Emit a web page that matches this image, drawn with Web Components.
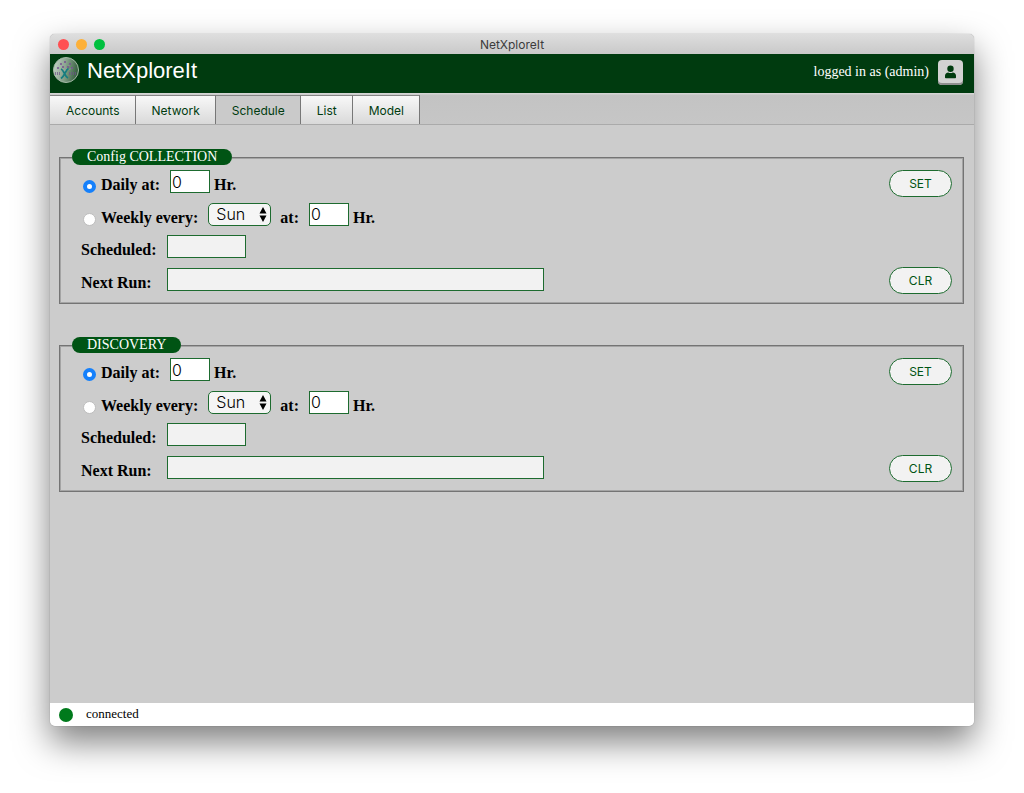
<!DOCTYPE html>
<html lang="en">
<head>
<meta charset="utf-8">
<meta name="viewport" content="width=device-width, initial-scale=1">
<title>NetXploreIt</title>
<style>
html { background: #fff; }
body {
  margin: 0; box-sizing: border-box; min-height: 100vh; padding: 34px 50px 67px;
  display: flex; flex-direction: column;
  font-family: "Liberation Serif", "Times New Roman", serif; color: #000;
}
</style>
</head>
<body>
<app-window caption="NetXploreIt">
  <app-header user="admin">NetXploreIt</app-header>
  <tab-bar>
    <tab-item>Accounts</tab-item>
    <tab-item>Network</tab-item>
    <tab-item selected>Schedule</tab-item>
    <tab-item>List</tab-item>
    <tab-item>Model</tab-item>
  </tab-bar>
  <schedule-view>
    <schedule-panel>Config COLLECTION</schedule-panel>
    <schedule-panel>DISCOVERY</schedule-panel>
  </schedule-view>
  <status-bar>connected</status-bar>
</app-window>

<script>
const define = (name, markup, setup) => {
  const template = document.createElement('template');
  template.innerHTML = markup;
  customElements.define(name, class extends HTMLElement {
    constructor() {
      super();
      this.attachShadow({ mode: 'open' }).append(template.content.cloneNode(true));
    }
    connectedCallback() { if (setup) setup(this, this.shadowRoot); }
  });
};

define('app-window', `
<style>
:host {
  flex: 1; display: flex; flex-direction: column; border-radius: 5px; overflow: hidden;
  background: #ccc; box-shadow: 0 0 1px rgba(0,0,0,.45), 0 16px 34px rgba(0,0,0,.5);
}
.title {
  display: grid; grid-template-columns: 1fr auto 1fr; align-items: center; height: 20px;
  background: linear-gradient(#dedede, #c9c9c9); color: #3c3c3c;
  font: 12px/20px Inter, "Liberation Sans", sans-serif;
}
.caption { padding-top: 1px; }
.lights { display: flex; gap: 7px; padding-left: 8px; }
.lights i { width: 11px; height: 11px; border-radius: 50%; }
.close { background: #ff5052; } .min { background: #fdb038; } .max { background: #00c03f; }
</style>
<div class="title">
  <div class="lights"><i class="close"></i><i class="min"></i><i class="max"></i></div>
  <span class="caption"></span>
</div>
<slot></slot>`, (el, root) => {
  root.querySelector('.caption').textContent = el.getAttribute('caption');
});

define('app-header', `
<style>
:host { display: flex; align-items: center; height: 39px; padding: 0 11px 0 3px; box-sizing: border-box; background: #003b0f; color: #fff; }
.logo { width: 26px; height: 26px; margin: 0 8px 8px 0; }
h1 { flex: 1; margin: 0; padding-bottom: 6px; font: 22px/28px "Liberation Sans", Arial, sans-serif; }
.who { font-size: 14px; line-height: 20px; padding-bottom: 4px; }
button { width: 25px; height: 25px; margin-left: 9px; margin-bottom: 3px; padding: 0; border: 0; border-radius: 4px; background: #d2d2d2; box-shadow: inset 0 -2px #8f8f8f; }
button svg { display: block; width: 25px; height: 25px; }
</style>
<svg class="logo" viewBox="0 0 26 26" aria-hidden="true">
  <defs><linearGradient id="g" x1="0" x2="1" y1="0.4" y2="0.6"><stop offset="0" stop-color="#c3d0c4"/><stop offset=".5" stop-color="#7f9c84"/><stop offset="1" stop-color="#2f5a39"/></linearGradient></defs>
  <circle cx="13" cy="13" r="12.5" fill="url(#g)" stroke="#a5b9a7"/>
  <g stroke="#9caaa5" stroke-width=".5"><path d="M12 14 6 11M12 14 8 7M12 14 12 5M12 14 17 7M12 14 20 11"/></g>
  <g fill="#775091"><circle cx="5" cy="11" r="1"/><circle cx="8" cy="7" r="1"/><circle cx="12" cy="5" r="1"/><circle cx="17" cy="7" r="1"/><circle cx="19" cy="11" r="1"/><circle cx="10" cy="10" r="1"/><circle cx="15" cy="10" r="1"/></g>
  <path d="M2 16.500h5M16 16.500h8" stroke="#70538b" stroke-width="3" stroke-dasharray="1 1" opacity=".7"/>
  <path d="M8 12c3 1 3.500 7.500 7 9M15.500 11.500c-3 1.500-3.500 7-7.500 10" fill="none" stroke="#167d80" stroke-width="1.800"/>
</svg>
<h1><slot></slot></h1>
<span class="who"></span>
<button type="button" aria-label="Account"><svg viewBox="0 0 25 25" aria-hidden="true"><g fill="#003b0f"><circle cx="12.500" cy="8.700" r="3.200"/><path d="M7 17.500v-1.800c0-2 1.500-3.300 3.200-3.300 1.600.9 3.100.9 4.600 0 1.800 0 3.200 1.400 3.200 3.300v1.800q0 .8-.8.800H7.800q-.8 0-.8-.8z"/></g></svg></button>`,
(el, root) => { root.querySelector('.who').textContent = `logged in as (${el.getAttribute('user')})`; });

define('tab-bar', `
<style>
:host { display: block; }
nav { display: flex; height: 32px; padding-top: 2px; box-sizing: border-box; background: linear-gradient(#d4d4d4 1px, #c3c3c3 2px, #c6c6c6); border-bottom: 1px solid #aaa; }
</style>
<nav><slot></slot></nav>`);

define('tab-item', `
<style>
:host { display: flex; }
button { padding: 2px 15px 0 16px; border: 0; border-top: 1px solid #858585; border-right: 1px solid #777; background: linear-gradient(#f8f8f8, #d9d9d9); color: #003b0f; font: 12px/26px Inter, "Liberation Sans", sans-serif; }
:host([selected]) button { background: #cacaca; }
</style>
<button type="button"><slot></slot></button>`);

define('schedule-view', `
<style>
:host { flex: 1; display: flex; flex-direction: column; gap: 33px; padding: 24px 10px 24px 9px; }
</style>
<slot></slot>`);

define('schedule-panel', `
<style>
:host { display: block; }
fieldset { margin: 0; padding: 5px 11px 9px 21px; border: 1px solid #747474; box-shadow: inset 0 0 0 1px #a4a4a4; min-width: 0; }
legend { margin-left: -9px; padding: 0 15px; border-radius: 8px; background: #005414; color: #fff; font-size: 14px; line-height: 16px; }
.body { display: flex; justify-content: space-between; gap: 20px; }
.rows { display: flex; flex-direction: column; justify-content: space-between; padding-bottom: 3px; }
.row { display: flex; align-items: center; height: 23px; font-size: 16px; line-height: 18px; font-weight: bold; }
label, .unit { padding-top: 7px; }
.field { min-width: 76px; }
.unit { margin-left: 4px; }
input, select { box-sizing: border-box; height: 23px; margin: 0 0 0 10px; border: 1px solid #1d6b2f; background: #fff; color: #000; font: 300 16px/21px Inter, "Liberation Sans", sans-serif; }
input { padding: 0 1px; border-radius: 0; }
input[type=radio] { appearance: none; width: 13px; height: 13px; margin: 10px 5px 0 2px; padding: 0; border: 1px solid #bdbdbd; border-radius: 50%; background: #fff; }
input[type=radio]:checked { border: 4px solid #1580fb; }
.hour { width: 40px; }
.short { width: 79px; }
.long { width: 377px; }
input[readonly] { background: #f2f2f2; }
.pick { position: relative; display: flex; margin-right: 9px; }
select { appearance: none; width: 63px; padding: 0 0 0 7px; border-radius: 5px; background: #f5f5f5; }
.pick svg { position: absolute; right: 4px; top: 4px; width: 8px; height: 15px; pointer-events: none; }
.actions { display: flex; flex-direction: column; justify-content: space-between; gap: 70px; }
button { width: 63px; height: 27px; padding: 0; border: 1px solid #1d6b2f; border-radius: 14px; background: #f2f2f2; color: #005414; font: 12px/16px Inter, "Liberation Sans", sans-serif; }
</style>
<fieldset>
  <legend><slot></slot></legend>
  <div class="body">
    <div class="rows">
      <div class="row">
        <input type="radio" name="mode" id="daily" checked><label for="daily">Daily at:</label>
        <input class="hour" type="text" value="0" aria-label="Daily hour"><span class="unit">Hr.</span>
      </div>
      <div class="row">
        <input type="radio" name="mode" id="weekly"><label for="weekly">Weekly every:</label>
        <span class="pick">
          <select aria-label="Day"><option>Sun</option><option>Mon</option><option>Tue</option><option>Wed</option><option>Thu</option><option>Fri</option><option>Sat</option></select>
          <svg viewBox="0 0 8 15" aria-hidden="true"><path d="M4 0 7.500 6.500h-7zM4 15 .5 8.500h7z"/></svg>
        </span>
        <label for="hour">at:</label>
        <input class="hour" id="hour" type="text" value="0"><span class="unit">Hr.</span>
      </div>
      <div class="row"><label class="field" for="scheduled">Scheduled:</label><input class="short" id="scheduled" type="text" readonly></div>
      <div class="row"><label class="field" for="next">Next Run:</label><input class="long" id="next" type="text" readonly></div>
    </div>
    <div class="actions"><button type="button">SET</button><button type="button">CLR</button></div>
  </div>
</fieldset>`);

define('status-bar', `
<style>
:host { display: flex; align-items: center; gap: 13px; height: 23px; padding-left: 9px; background: #fff; font-size: 13px; line-height: 16px; }
i { width: 14px; height: 14px; border-radius: 50%; background: #007a1c; }
span { padding-bottom: 1px; }
</style>
<i></i><span role="status"><slot></slot></span>`);
</script>
</body>
</html>
